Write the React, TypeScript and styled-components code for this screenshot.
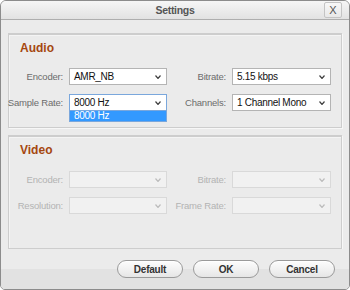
import React from "react";
import styled, { createGlobalStyle } from "styled-components";

const GlobalStyle = createGlobalStyle`
  html, body {
    margin: 0;
    padding: 0;
    background: #ffffff;
  }
  body {
    font-family: "Liberation Sans", Arial, sans-serif;
  }
`;

const Window = styled.div`
  box-sizing: border-box;
  width: 350px;
  height: 290px;
  border: 1px solid #8c8c8c;
  border-radius: 6px 6px 5px 5px;
  overflow: hidden;
  display: flex;
  flex-direction: column;
  background: #ebebeb;
`;

const TitleBar = styled.div`
  position: relative;
  height: 18px;
  flex-shrink: 0;
  display: flex;
  align-items: center;
  justify-content: center;
  background: linear-gradient(#f6f6f6, #e2e2e2);
  border-bottom: 1px solid #aeaeae;
`;

const Title = styled.span`
  font-size: 10.5px;
  color: #555;
  font-weight: bold;
  letter-spacing: -0.3px;
`;

const CloseButton = styled.div`
  position: absolute;
  top: 1px;
  right: 7px;
  width: 18px;
  height: 16px;
  box-sizing: border-box;
  border: 1px solid #c4c4c4;
  border-radius: 2px;
  background: linear-gradient(#f8f8f8, #e8e8e8);
  display: flex;
  align-items: center;
  justify-content: center;
  font-size: 11px;
  color: #555;
`;

const Body = styled.div`
  flex: 1;
  display: flex;
  flex-direction: column;
  gap: 7px;
  padding: 13px 7px 0 7px;
`;

const Group = styled.div<{ $bottom: number }>`
  border: 1px solid #cdcdcd;
  border-top: 2px solid #cdcdcd;
  box-shadow: 1px 1px 0 #f7f7f7, inset 1px 1px 0 #f4f4f4;
  padding: 6px 10px ${(p) => p.$bottom}px 0;
  display: flex;
  flex-direction: column;
`;

const GroupTitle = styled.div<{ $space: number }>`
  font-size: 12px;
  font-weight: bold;
  color: #a5470f;
  padding-left: 11px;
  line-height: 14px;
  margin-bottom: ${(p) => p.$space}px;
`;

const Grid = styled.div`
  display: grid;
  grid-template-columns: 54px 98px 1fr 99px;
  column-gap: 6px;
  row-gap: 9px;
  align-items: center;
`;

const Label = styled.span<{ $disabled?: boolean }>`
  justify-self: end;
  white-space: nowrap;
  font-size: 9.5px;
  letter-spacing: -0.2px;
  color: ${(p) => (p.$disabled ? "#b3b3b3" : "#6b6b6b")};
`;

const SelectBox = styled.div<{ $disabled?: boolean; $focused?: boolean }>`
  position: relative;
  box-sizing: border-box;
  height: 17px;
  display: flex;
  align-items: center;
  padding: 0 4px;
  font-size: 10px;
  letter-spacing: -0.3px;
  color: #111;
  background: ${(p) => (p.$disabled ? "#f1f1f1" : "#ffffff")};
  border: 1px solid
    ${(p) => (p.$focused ? "#7aa7dc" : p.$disabled ? "#d9d9d9" : "#b4b4b4")};
`;

const Chevron = styled.svg<{ $disabled?: boolean }>`
  position: absolute;
  right: 5px;
  top: 6px;
  width: 6px;
  height: 4px;
  stroke: ${(p) => (p.$disabled ? "#bdbdbd" : "#444")};
`;

const DropList = styled.div`
  position: absolute;
  left: -1px;
  right: -1px;
  top: 15px;
  height: 12px;
  box-sizing: border-box;
  border: 1px solid #7aa7dc;
  background: #3399ff;
  color: #fff;
  font-size: 10px;
  line-height: 10px;
  padding-left: 4px;
  z-index: 2;
`;

const Footer = styled.div`
  flex: 1;
  display: flex;
  justify-content: flex-end;
  align-items: center;
  gap: 10px;
  padding: 0 14px 0 0;
  background: linear-gradient(#ebebeb 0, #ebebeb 20px, #e2e2e2 20px);
`;

const PillButton = styled.div`
  box-sizing: border-box;
  width: 66px;
  height: 18px;
  border: 1px solid #9a9a9a;
  border-radius: 9px;
  background: linear-gradient(#fdfdfd, #e6e6e6);
  box-shadow: inset 0 1px 0 #ffffff;
  display: flex;
  align-items: center;
  justify-content: center;
  font-size: 10px;
  font-weight: bold;
  color: #333;
  letter-spacing: -0.2px;
`;

interface SProps {
  value?: string;
  disabled?: boolean;
  focused?: boolean;
  open?: boolean;
}

function Select({ value, disabled, focused, open }: SProps) {
  return (
    <SelectBox $disabled={disabled} $focused={focused}>
      {value}
      <Chevron $disabled={disabled} viewBox="0 0 6 4" fill="none" strokeWidth="1.2">
        <polyline points="0.5,0.5 3,3.5 5.5,0.5" />
      </Chevron>
      {open && <DropList>{value}</DropList>}
    </SelectBox>
  );
}

function App() {
  return (
    <>
      <GlobalStyle />
      <Window>
        <TitleBar>
          <Title>Settings</Title>
          <CloseButton>X</CloseButton>
        </TitleBar>
        <Body>
          <Group $bottom={16}>
            <GroupTitle $space={13}>Audio</GroupTitle>
            <Grid>
              <Label>Encoder:</Label>
              <Select value="AMR_NB" />
              <Label>Bitrate:</Label>
              <Select value="5.15 kbps" />
              <Label>Sample Rate:</Label>
              <Select value="8000 Hz" focused open />
              <Label>Channels:</Label>
              <Select value="1 Channel Mono" />
            </Grid>
          </Group>
          <Group $bottom={34}>
            <GroupTitle $space={14}>Video</GroupTitle>
            <Grid>
              <Label $disabled>Encoder:</Label>
              <Select disabled />
              <Label $disabled>Bitrate:</Label>
              <Select disabled />
              <Label $disabled>Resolution:</Label>
              <Select disabled />
              <Label $disabled>Frame Rate:</Label>
              <Select disabled />
            </Grid>
          </Group>
        </Body>
        <Footer>
          <PillButton>Default</PillButton>
          <PillButton>OK</PillButton>
          <PillButton>Cancel</PillButton>
        </Footer>
      </Window>
    </>
  );
}

export default App;
